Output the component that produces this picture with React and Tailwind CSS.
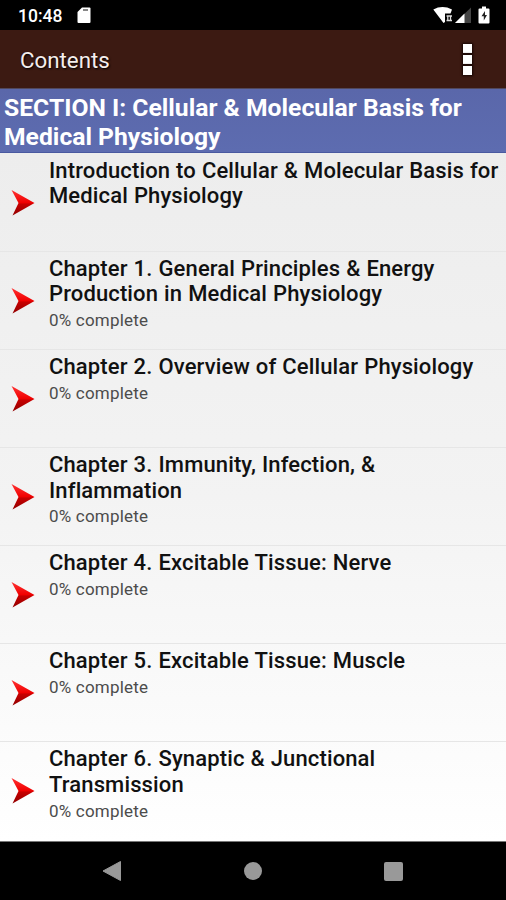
const chapters = [
  { lines: ["Introduction to Cellular & Molecular Basis for", "Medical Physiology"] },
  {
    lines: ["Chapter 1. General Principles & Energy", "Production in Medical Physiology"],
    progress: 0,
  },
  { lines: ["Chapter 2. Overview of Cellular Physiology"], progress: 0 },
  { lines: ["Chapter 3. Immunity, Infection, &", "Inflammation"], progress: 0 },
  { lines: ["Chapter 4. Excitable Tissue: Nerve"], progress: 0 },
  { lines: ["Chapter 5. Excitable Tissue: Muscle"], progress: 0 },
  { lines: ["Chapter 6. Synaptic & Junctional", "Transmission"], progress: 0 },
];

function StatusBar() {
  return (
    <div className="flex h-[30px] shrink-0 items-center justify-between bg-black pl-[18px] pr-[15px] text-white">
      <div className="flex items-center gap-[15px]">
        <span className="w-[44px] whitespace-nowrap pt-[3px] text-[17.5px] font-medium leading-none">10:48</span>
        {/* SD card */}
        <svg width="14" height="17" viewBox="0 0 14 17">
          <path d="M5 .5H12.5Q13.5 .5 13.5 1.5V15Q13.5 16 12.5 16H1.5Q.5 16 .5 15V5Z" fill="#fff" />
          <path d="M6 3H11" stroke="#555" strokeWidth="1.4" />
        </svg>
      </div>
      <svg width="58" height="18" viewBox="0 0 58 18">
        {/* Wifi */}
        <path d="M.3 3.5Q9.5-1.3 19 3.5L17.5 7.5H12V16L10.5 17Z" fill="#fff" />
        <path d="M13.5 10H19M13.5 14.5H19M14.8 10V15M17.5 10V15" stroke="#ddd" strokeWidth="1.3" />
        {/* Signal */}
        <path d="M22 17L38 1.5V17Z" fill="#444" />
        <path d="M22 17L31.5 7.5V17Z" fill="#fff" />
        {/* Battery */}
        <path d="M49 .5H53V2.5H55.5Q56.5 2.5 56.5 3.5V16.5Q56.5 17.5 55.5 17.5H46.5Q45.5 17.5 45.5 16.5V3.5Q45.5 2.5 46.5 2.5H49Z" fill="#fff" />
        <path d="M52 5L48.5 10.3H50.8V14.5L54 9H52Z" fill="#222" />
      </svg>
    </div>
  );
}

function AppBar() {
  return (
    <header className="flex h-[59px] shrink-0 items-center justify-between border-b border-[#51485d] bg-[#3c1a12] pl-5 pr-[34px]">
      <h1 className="pt-[3px] text-[22.3px] leading-none text-[#f5eeec] [text-shadow:1px_1px_2px_#000]">Contents</h1>
      <button aria-label="More options" className="flex flex-col gap-[2px]">
        <span className="h-[9px] w-[9px] bg-white shadow-[0_0_2px_1px_#160604]"></span>
        <span className="h-[9px] w-[9px] bg-white shadow-[0_0_2px_1px_#160604]"></span>
        <span className="h-[9px] w-[9px] bg-white shadow-[0_0_2px_1px_#160604]"></span>
      </button>
    </header>
  );
}

function Arrow() {
  return (
    <svg className="mt-[35px] ml-[10px] shrink-0" width="26" height="28" viewBox="0 0 26 28">
      <defs>
        <linearGradient id="arrow" x1="0" y1="0" x2="0" y2="1">
          <stop offset="0" stopColor="#f33" />
          <stop offset=".5" stopColor="#f00000" />
          <stop offset=".55" stopColor="#c80000" />
          <stop offset="1" stopColor="#900000" />
        </linearGradient>
      </defs>
      <path d="M1.5 1L24.5 14L2.5 26.5L8.5 14Z" fill="url(#arrow)" />
    </svg>
  );
}

function ChapterRow({ chapter }) {
  return (
    <li className="flex h-[98.1px] border-b border-[#e6e6e6] last:border-b-0">
      <Arrow />
      <div className="ml-[13px] pt-[4px]">
        <h3 className="whitespace-nowrap text-[22px] font-medium leading-[25.7px] tracking-[0.13px] text-[#111] [word-spacing:0.4px]">
          {chapter.lines.map((line) => (
            <span key={line} className="block">{line}</span>
          ))}
        </h3>
        {chapter.progress !== undefined && (
          <p className="text-[17px] leading-[26.6px] tracking-[0.2px] text-[#4c4c4c]">{chapter.progress}% complete</p>
        )}
      </div>
    </li>
  );
}

function NavBar() {
  return (
    <nav className="flex h-[59px] shrink-0 items-center justify-between border-t border-[#777] bg-black pl-[102px] pr-[103px]">
      <svg width="20" height="22" viewBox="0 0 20 22">
        <path d="M1 11L18.5 1.5V20.5Z" fill="#999" stroke="#999" strokeLinejoin="round" />
      </svg>
      <span className="h-[18px] w-[18px] rounded-full bg-[#999]"></span>
      <span className="h-[19px] w-[19px] rounded-[2px] bg-[#999]"></span>
    </nav>
  );
}

function App() {
  return (
    <div className="flex h-[900px] w-[506px] flex-col overflow-hidden bg-white font-['Roboto',sans-serif]">
      <StatusBar />
      <AppBar />
      <h2 className="h-[64px] shrink-0 whitespace-nowrap border-b border-[#4959a0] bg-linear-to-b from-[#5a67aa] to-[#5d6cb0] pl-1 pt-[5px] text-[24.7px] font-bold leading-[28.5px] text-white">
        SECTION I: Cellular &amp; Molecular Basis for
        <br />
        Medical Physiology
      </h2>
      <ul className="flex-1 overflow-hidden bg-linear-to-b from-[#ededed] via-[#f3f3f3] to-white pt-[0.7px]">
        {chapters.map((chapter) => (
          <ChapterRow key={chapter.lines[0]} chapter={chapter} />
        ))}
      </ul>
      <NavBar />
    </div>
  );
}

export default App;
